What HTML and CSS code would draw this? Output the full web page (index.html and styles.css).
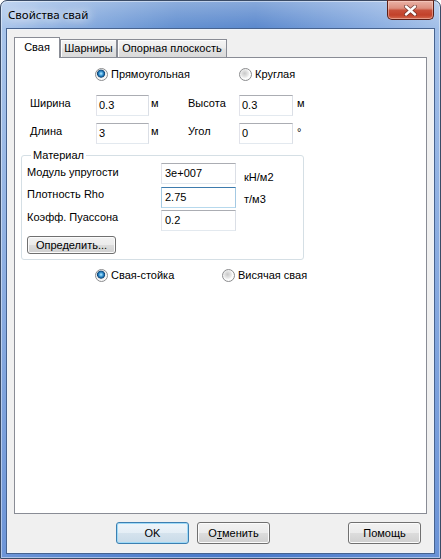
FILE: index.html
```html
<!DOCTYPE html>
<html lang="ru">
<head>
<meta charset="utf-8">
<title>Свойства свай</title>
<link rel="stylesheet" href="styles.css">
</head>
<body>
<div class="window">
  <div class="titlebar">
    <span class="title">Свойства свай</span>
    <div class="close">
      <svg class="close-x" width="13" height="11" viewBox="0 0 13 11">
        <path d="M2 1.5 L11 9.5 M11 1.5 L2 9.5" stroke="#5a2a24" stroke-width="4" stroke-linecap="round" fill="none" opacity="0.75"/>
        <path d="M2 1.5 L11 9.5 M11 1.5 L2 9.5" stroke="#ffffff" stroke-width="2.4" stroke-linecap="round" fill="none"/>
      </svg>
    </div>
  </div>
  <div class="client">
    <div class="tabs">
      <div class="tab tab-active">Свая</div>
      <div class="tab tab-2">Шарниры</div>
      <div class="tab tab-3">Опорная плоскость</div>
    </div>
    <div class="panel">
      <div class="radio-row radio-row-top">
        <div class="radio radio-w1"><span class="dot dot-checked"></span><span>Прямоугольная</span></div>
        <div class="radio"><span class="dot"></span><span>Круглая</span></div>
      </div>
      <div class="dims">
        <span class="lbl">Ширина</span><div class="edit">0.3</div><span class="unit">м</span>
        <span class="lbl">Высота</span><div class="edit">0.3</div><span class="unit unit-r">м</span>
        <span class="lbl">Длина</span><div class="edit">3</div><span class="unit">м</span>
        <span class="lbl">Угол</span><div class="edit">0</div><span class="unit unit-r unit-deg">°</span>
      </div>
      <fieldset class="group">
        <legend>Материал</legend>
        <div class="mrow">
          <span class="mlabel mlabel-1">Модуль упругости</span>
          <div class="edit edit-m">3e+007</div>
          <span class="munit munit-1">кН/м2</span>
        </div>
        <div class="mrow mrow-2">
          <span class="mlabel">Плотность Rho</span>
          <div class="edit edit-m edit-focus">2.75</div>
          <span class="munit munit-2">т/м3</span>
        </div>
        <div class="mrow mrow-3">
          <span class="mlabel">Коэфф. Пуассона</span>
          <div class="edit edit-m">0.2</div>
        </div>
        <div class="btn btn-define">Определить...</div>
      </fieldset>
      <div class="radio-row radio-row-bottom">
        <div class="radio radio-w2"><span class="dot dot-checked"></span><span>Свая-стойка</span></div>
        <div class="radio"><span class="dot"></span><span>Висячая свая</span></div>
      </div>
    </div>
    <div class="buttons">
      <div class="btn btn-main btn-default">OK</div>
      <div class="btn btn-main">О<u>т</u>менить</div>
      <div class="btn btn-main btn-help">Помощь</div>
    </div>
  </div>
</div>
</body>
</html>
```

FILE: styles.css
```css
* { box-sizing: border-box; }
html, body { margin: 0; padding: 0; }
body {
  width: 441px;
  height: 559px;
  overflow: hidden;
  background: #ffffff;
  font-family: "Liberation Sans", Arial, sans-serif;
  font-size: 11px;
  color: #000;
}

.window {
  width: 441px;
  height: 559px;
  display: flex;
  flex-direction: column;
  padding: 0 6px 5px 6px;
  border: 1px solid #3a4b66;
  border-radius: 7px 7px 0 0;
  background:
    linear-gradient(to bottom, rgba(255,255,255,0.28), rgba(255,255,255,0) 28px),
    linear-gradient(to bottom, rgba(70,120,200,0) 40px, rgba(60,110,200,0.55) 100%),
    linear-gradient(to right, #a9c5eb 0%, #8fb2e2 12%, #628fd0 40%, #5a88cd 58%, #86aadf 84%, #a2bfe8 100%);
  box-shadow: inset 0 0 0 1px rgba(255,255,255,0.45);
}

.titlebar {
  height: 28px;
  flex: none;
  display: flex;
  justify-content: space-between;
  align-items: flex-start;
  padding-left: 1px;
}
.title {
  margin-top: 6px;
  font-family: "Noto Sans", "Open Sans", sans-serif;
  font-size: 11.5px;
  line-height: 16px;
  color: #000;
  text-shadow: 0 0 8px rgba(255,255,255,0.95), 0 0 14px rgba(255,255,255,0.85), 0 0 20px rgba(255,255,255,0.6);
}
.close {
  width: 47px;
  height: 20px;
  margin-top: -1px;
  display: flex;
  align-items: center;
  justify-content: center;
  border: 1px solid #5b1f17;
  border-top-color: #7a3a30;
  border-radius: 0 0 5px 5px;
  background: linear-gradient(to bottom, #eab2a6 0%, #dd8f7f 40%, #c8503a 52%, #c2412a 78%, #d4694e 100%);
  box-shadow: inset 0 0 0 1px rgba(255,220,210,0.45);
}
.close-x { display: block; }

.client {
  flex: 1;
  display: flex;
  flex-direction: column;
  background: #f0f0f0;
  border: 1px solid #eef3fa;
  box-shadow: 0 0 0 1px #47638f;
  padding: 7px 6px 8px 6px;
}

.tabs {
  flex: none;
  display: flex;
  align-items: flex-end;
  height: 21px;
  margin-bottom: -1px;
  position: relative;
  z-index: 1;
}
.tab {
  height: 18px;
  margin-bottom: 1px;
  border: 1px solid #898c95;
  border-bottom: none;
  background: linear-gradient(to bottom, #f5f5f5 0%, #ececec 45%, #e1e1e1 55%, #dadada 100%);
  box-shadow: inset 1px 1px 0 #fdfdfd;
  padding-top: 2px;
  line-height: 13px;
  text-align: center;
}
.tab-active {
  width: 46px;
  height: 21px;
  margin-bottom: 0;
  background: #ffffff;
  box-shadow: none;
  padding-top: 3px;
}
.tab-2 { width: 57px; }
.tab-3 { width: 110px; }

.panel {
  flex: 1;
  background: #ffffff;
  border: 1px solid #898c95;
}

.radio-row {
  display: flex;
  height: 13px;
  padding-left: 80px;
}
.radio-row-top { margin-top: 10px; }
.radio-row-bottom { margin-top: 9px; }
.radio {
  display: flex;
  align-items: center;
  gap: 3px;
  height: 13px;
  line-height: 13px;
  white-space: nowrap;
}
.radio-w1 { width: 144px; }
.radio-w2 { width: 127px; }
.dot {
  flex: none;
  width: 13px;
  height: 13px;
  border-radius: 50%;
  border: 1px solid #8b8c8e;
  background: radial-gradient(circle at 42% 40%, #c9c9c9 0, #dedede 2.5px, #ececec 4px, #fbfbfb 5px, #ffffff 100%);
}
.dot-checked {
  background: radial-gradient(circle at 46% 42%, #c3ecff 0, #5bb3e6 1.4px, #1d70b0 2.8px, #0f4777 3.7px, #e4e4e4 4.3px, #f6f6f6 5px, #ffffff 100%);
}

.dims {
  display: grid;
  grid-template-columns: 66px 53px 39px 51px 54px auto;
  grid-template-rows: 21px 21px;
  row-gap: 7px;
  margin-top: 14px;
  padding-left: 15px;
}
.lbl, .unit {
  align-self: start;
  padding-top: 2px;
  line-height: 13px;
  white-space: nowrap;
}
.unit { padding-left: 2px; }
.unit-r { padding-left: 4px; }
.unit-deg { padding-top: 3px; }

.edit {
  height: 21px;
  border: 1px solid;
  border-color: #abadb3 #dbdfe6 #e3e9ef #e2e3ea;
  background: #ffffff;
  padding: 0 2px;
  line-height: 19px;
  white-space: nowrap;
  overflow: hidden;
}
.edit-m {
  flex: none;
  width: 75px;
  padding: 0 3px;
}
.edit-focus {
  border-color: #3d7bad #a4c9e3 #b7d9ed #a4c9e3;
}

.group {
  width: 283px;
  min-width: 0;
  margin: 5px 0 0 6px;
  padding: 1px 5px 5px 5px;
  border: 1px solid #d5dfe5;
  border-radius: 3px;
}
.group legend {
  margin-left: 4px;
  padding: 0 2px;
  line-height: 13px;
}
.mrow {
  display: flex;
  align-items: flex-start;
  height: 21px;
}
.mrow-2 { margin-top: 3px; }
.mrow-3 { margin-top: 2px; }
.mlabel {
  flex: none;
  width: 134px;
  padding-top: 1px;
  line-height: 13px;
  white-space: nowrap;
}
.mlabel-1 { padding-top: 3px; }
.munit {
  padding-left: 8px;
  line-height: 13px;
  white-space: nowrap;
}
.munit-1 { padding-top: 8px; }
.munit-2 { padding-top: 6px; }

.btn {
  display: flex;
  align-items: center;
  justify-content: center;
  border: 1px solid #707070;
  border-radius: 3px;
  background: linear-gradient(to bottom, #f2f2f2 0%, #ebebeb 50%, #dddddd 50%, #cfcfcf 100%);
  box-shadow: inset 0 0 0 1px #fbfbfb;
  white-space: nowrap;
}
.btn-define {
  width: 89px;
  height: 18px;
  margin-top: 5px;
  padding-bottom: 1px;
}

.buttons {
  flex: none;
  display: flex;
  gap: 8px;
  height: 22px;
  margin-top: 8px;
  padding: 0 6px 0 102px;
}
.btn-main {
  width: 73px;
  height: 22px;
}
.btn-default {
  border-color: #3c7fb1;
  background: linear-gradient(to bottom, #eef5fa 0%, #e4eef5 50%, #d5e3ed 50%, #c9dbe8 100%);
  box-shadow: inset 0 0 0 1px #9fdaf7;
}
.btn-help { margin-left: auto; }
.btn u { text-decoration: underline; }
```
